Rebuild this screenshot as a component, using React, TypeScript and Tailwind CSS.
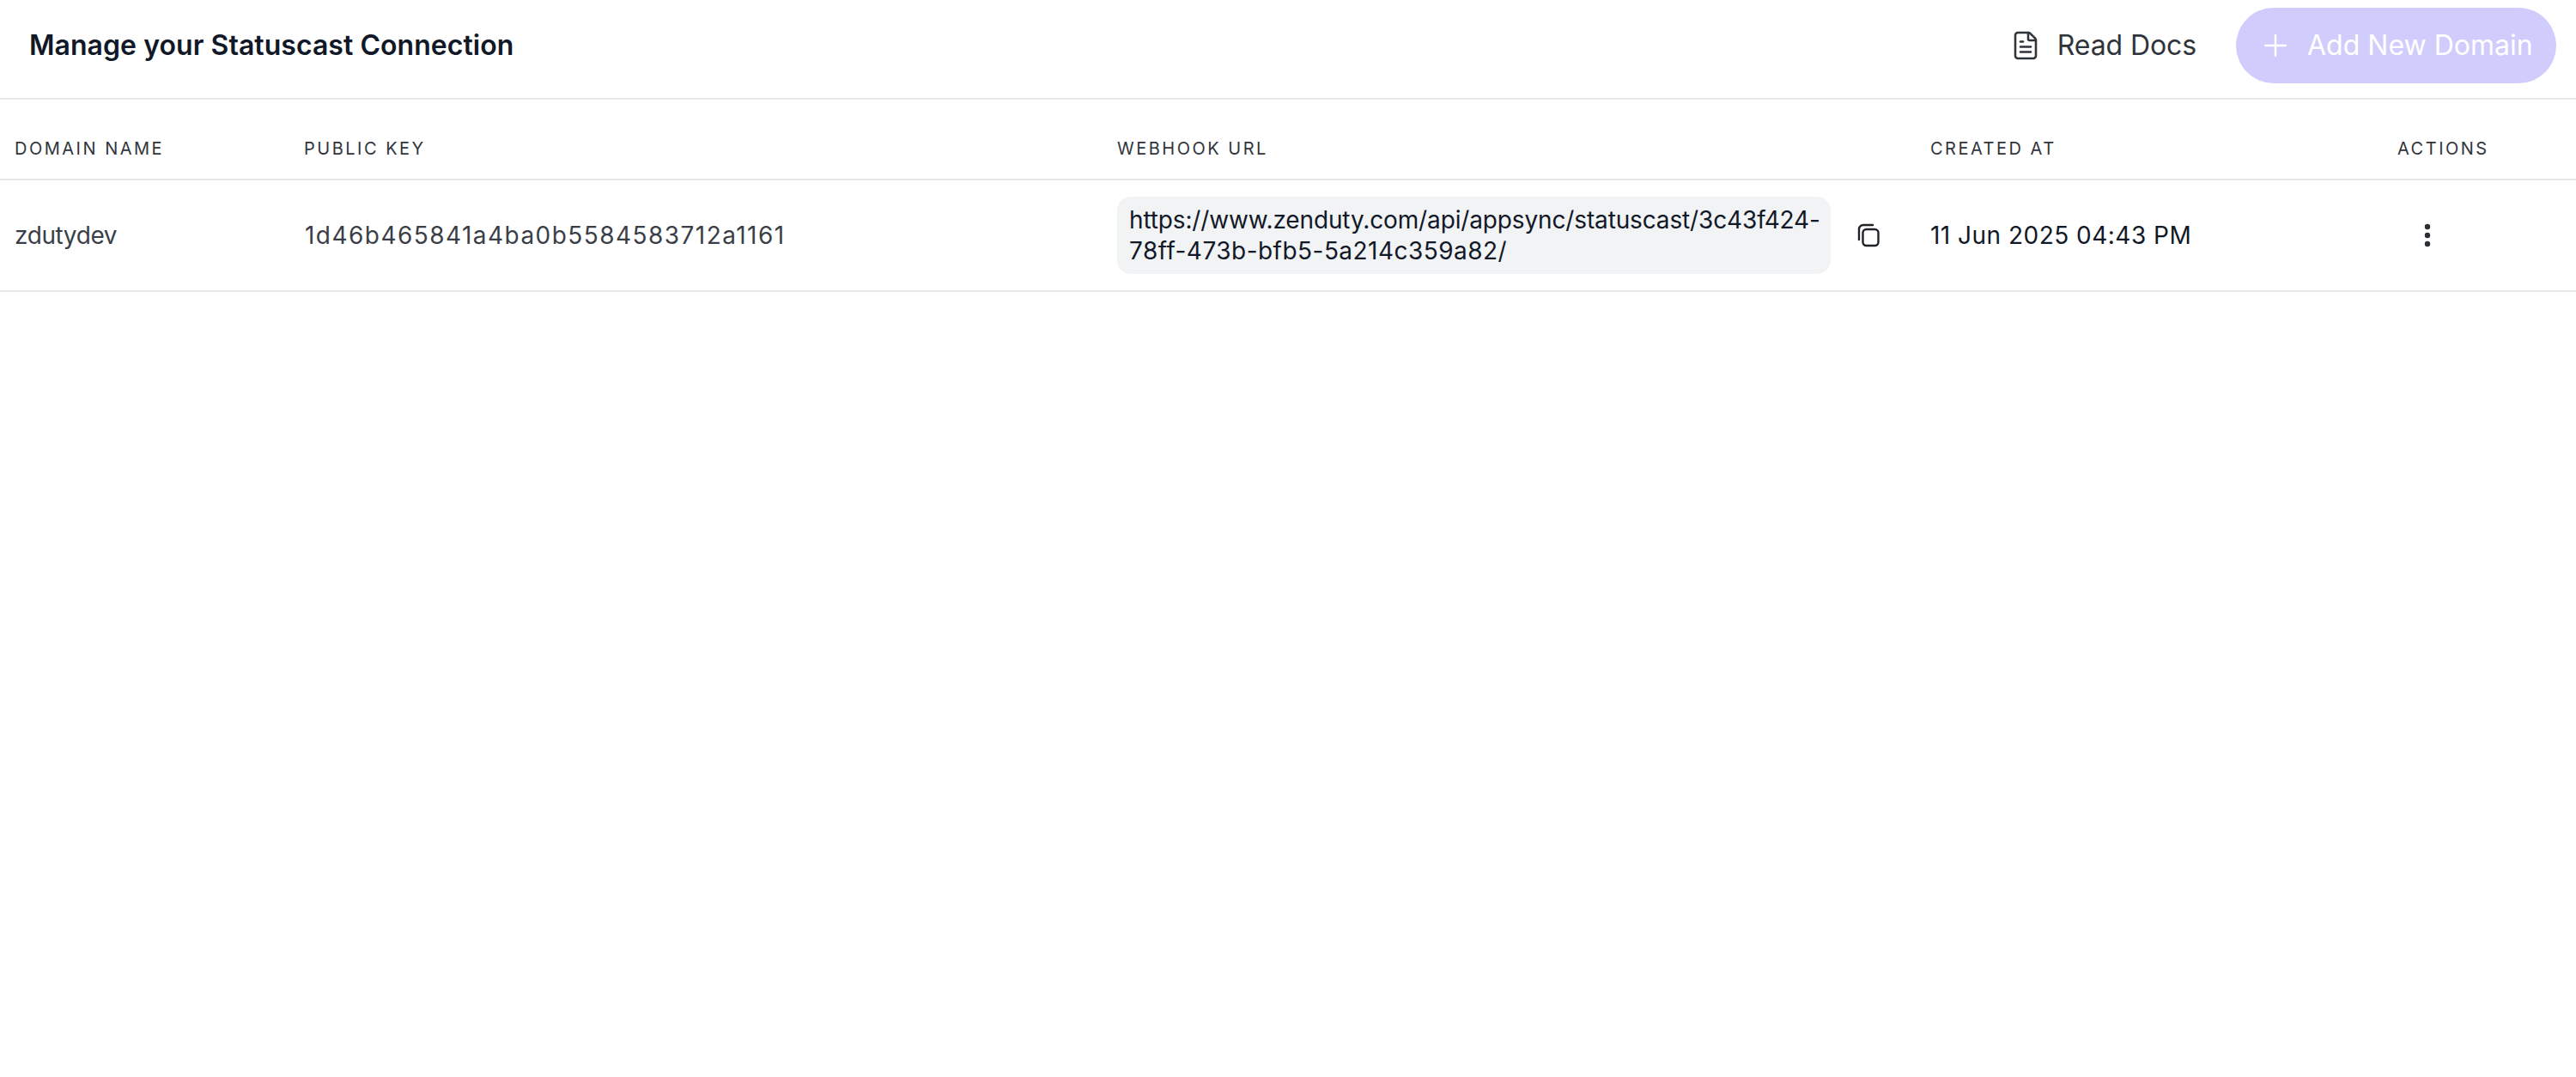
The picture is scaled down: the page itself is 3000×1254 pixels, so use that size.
import React from "react";
import { FileText, Plus } from "lucide-react";

function CopyIcon() {
  return (
    <svg width="28" height="28" viewBox="0 0 28 28" fill="none" stroke="#1f2328" strokeWidth="2.4">
      <rect x="7.5" y="7" width="18" height="19" rx="4" />
      <path d="M3 19V7a5 5 0 0 1 5-5h11" strokeLinecap="round" />
    </svg>
  );
}

function KebabIcon() {
  return (
    <svg width="12" height="28" viewBox="0 0 12 28" fill="#2a2e35">
      <circle cx="6" cy="4" r="3.2" />
      <circle cx="6" cy="14" r="3.2" />
      <circle cx="6" cy="24" r="3.2" />
    </svg>
  );
}

const headers = ["DOMAIN NAME", "PUBLIC KEY", "WEBHOOK URL", "CREATED AT"];

function App() {
  return (
    <div className="min-h-[1254px] bg-white font-['Inter',sans-serif]">
      <header className="flex h-[116px] items-center justify-between border-b-2 border-[#e5e7eb] pb-[9px] pl-[34px] pr-[23px]">
        <h1 className="text-[32px] font-semibold tracking-[0.05px] text-[#111827]">Manage your Statuscast Connection</h1>
        <div className="flex items-center gap-[46px]">
          <a href="#" className="flex items-center gap-[19px] text-[32px] tracking-[-0.1px] text-[#2f343b]">
            <FileText size={36} strokeWidth={1.7} />
            Read Docs
          </a>
          <button className="flex h-[88px] w-[373px] items-center gap-[17px] rounded-full bg-[#d0cdfd] pl-[26px] text-[32px] text-white">
            <Plus size={40} strokeWidth={1.5} />
            Add New Domain
          </button>
        </div>
      </header>

      <div className="grid h-[94px] grid-cols-[337px_947px_947px_542px_227px] items-center border-b-2 border-[#e5e7eb] pt-[22px] text-[20px] tracking-[2.5px] text-[#30353c]">
        {headers.map((label) => (
          <div key={label} className="pl-[17px]">
            {label}
          </div>
        ))}
        <div className="pl-[19px]">ACTIONS</div>
      </div>

      <div className="grid h-[130px] grid-cols-[337px_947px_947px_542px_227px] items-center border-b-2 border-[#e5e7eb] text-[28px]">
        <div className="pl-[17px] tracking-[-0.4px] text-[#3a3f47]">zdutydev</div>
        <div className="pl-[18px] tracking-[1.45px] text-[#3a3f47]">1d46b465841a4ba0b5584583712a1161</div>
        <div className="flex items-center gap-[30px] pl-[17px]">
          <div className="w-[831px] rounded-[16px] bg-[#f1f3f5] px-[14px] py-[9px] leading-[36px] text-[#111827]">
            <span className="tracking-[-0.14px]">https://www.zenduty.com/api/appsync/statuscast/3c43f424-</span>
            <br />
            <span className="tracking-[0.47px]">78ff-473b-bfb5-5a214c359a82/</span>
          </div>
          <CopyIcon />
        </div>
        <div className="pl-[17px] tracking-[0.48px] text-[#111827]">11 Jun 2025 04:43 PM</div>
        <div className="pl-[48px]">
          <KebabIcon />
        </div>
      </div>
    </div>
  );
}

export default App;
